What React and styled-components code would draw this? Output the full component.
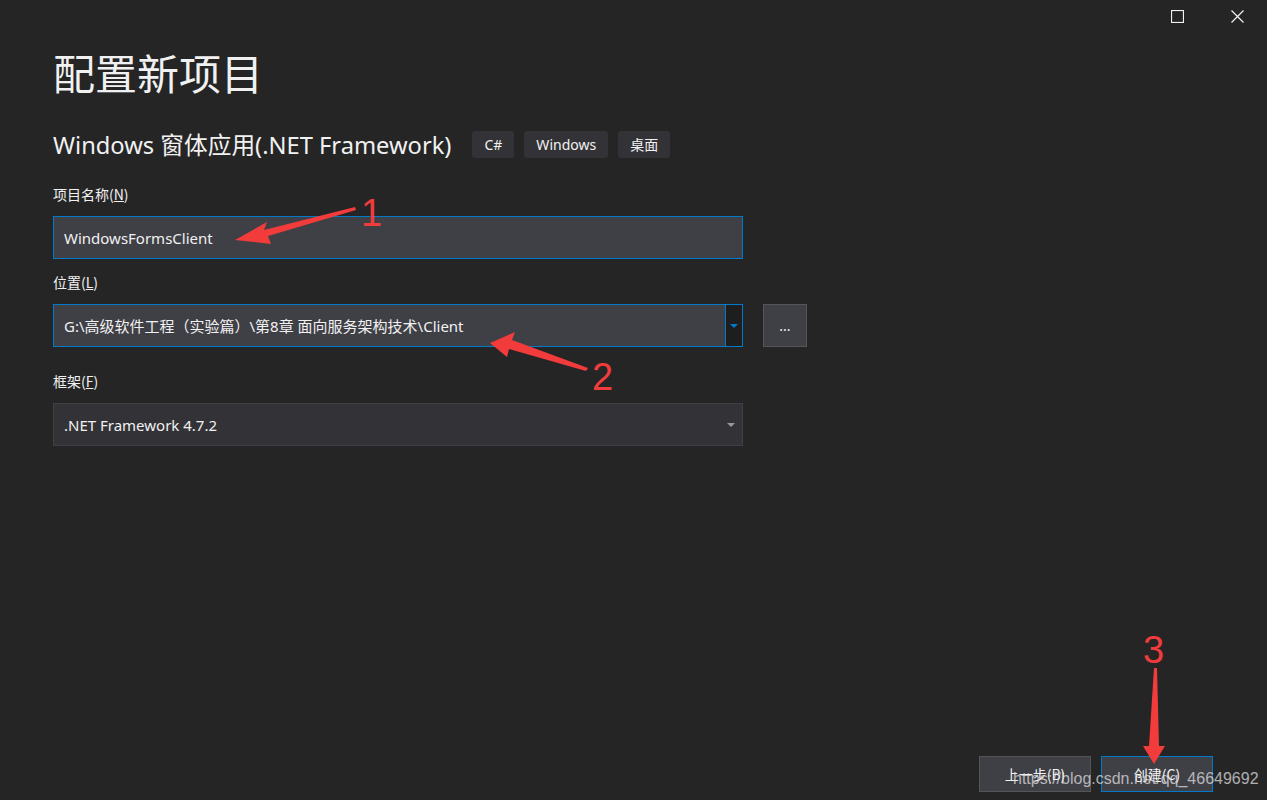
import React from 'react';
import styled, { createGlobalStyle } from 'styled-components';

const GlobalStyle = createGlobalStyle`
  html, body {
    margin: 0;
    padding: 0;
    background: #252526;
  }
  body {
    font-family: "Noto Sans", "Noto Sans CJK SC", sans-serif;
    color: #f1f1f1;
  }
`;

const Page = styled.div`
  position: relative;
  width: 1267px;
  height: 800px;
  overflow: hidden;
  display: flex;
  flex-direction: column;
  background: #252526;
`;

const TitleBar = styled.div`
  display: flex;
  justify-content: flex-end;
  height: 32px;
`;

const WinButton = styled.div`
  width: 60px;
  height: 32px;
  display: flex;
  align-items: center;
  justify-content: center;
`;

const Content = styled.div`
  display: flex;
  flex-direction: column;
  padding-left: 53px;
  flex: 1;
`;

const Title = styled.h1`
  margin: 10px 0 0 0;
  font-family: "Noto Sans CJK SC", sans-serif;
  font-size: 42px;
  font-weight: 400;
  line-height: 60px;
  color: #f1f1f1;
`;

const SubRow = styled.div`
  display: flex;
  align-items: center;
  margin-top: 22px;
  height: 40px;
`;

const SubTitle = styled.div`
  font-family: "Noto Sans", "Noto Sans CJK SC", sans-serif;
  font-size: 23.7px;
  margin-right: 21px;
  color: #f1f1f1;
`;

const Tag = styled.div`
  height: 27px;
  padding: 0 12px;
  margin-right: 10px;
  display: flex;
  align-items: center;
  background: #333337;
  border-radius: 3px;
  font-size: 14px;
  color: #f1f1f1;
`;

const Label = styled.div`
  font-family: "Noto Sans CJK SC", sans-serif;
  font-size: 14px;
  line-height: 20px;
  margin-top: ${p => p.$top}px;
  margin-bottom: 12px;
  color: #f1f1f1;
  u { text-decoration: underline; }
`;

const FieldRow = styled.div`
  display: flex;
  align-items: center;
`;

const TextBox = styled.div`
  box-sizing: border-box;
  width: 690px;
  height: 43px;
  display: flex;
  align-items: center;
  background: ${p => (p.$dim ? '#333337' : '#3f3f46')};
  border: 1px solid ${p => (p.$focus ? '#007acc' : '#3f3f46')};
  font-size: 15px;
  color: #f1f1f1;
`;

const BoxText = styled.div`
  flex: 1;
  padding-left: 10px;
  white-space: nowrap;
  font-family: "Noto Sans", "Noto Sans CJK SC", sans-serif;
`;

const DropPart = styled.div`
  width: 16px;
  height: 100%;
  display: flex;
  align-items: center;
  justify-content: center;
  background: ${p => (p.$split ? '#1e1e1e' : 'transparent')};
  border-left: ${p => (p.$split ? '1px solid #007acc' : 'none')};
  margin-right: ${p => (p.$split ? '0' : '3px')};
`;

const Caret = styled.div`
  width: 0;
  height: 0;
  border-left: 4px solid transparent;
  border-right: 4px solid transparent;
  border-top: 4px solid ${p => p.$color};
`;

const BrowseButton = styled.div`
  box-sizing: border-box;
  width: 44px;
  height: 43px;
  margin-left: 20px;
  display: flex;
  align-items: center;
  justify-content: center;
  background: #3f3f46;
  border: 1px solid #555555;
  font-size: 14px;
  color: #f1f1f1;
`;

const Footer = styled.div`
  margin-top: auto;
  display: flex;
  justify-content: flex-end;
  gap: 10px;
  padding: 0 54px 8px 0;
`;

const FootButton = styled.div`
  box-sizing: border-box;
  width: 112px;
  height: 36px;
  display: flex;
  align-items: center;
  justify-content: center;
  background: #3f3f46;
  border: 1px solid ${p => (p.$primary ? '#007acc' : '#555555')};
  font-family: "Noto Sans CJK SC", sans-serif;
  font-size: 14px;
  color: #f1f1f1;
`;

const Overlay = styled.svg`
  position: absolute;
  left: 0;
  top: 0;
  pointer-events: none;
`;

const Watermark = styled.div`
  position: absolute;
  left: 1013px;
  top: 769px;
  font-family: "Liberation Sans", Arial, sans-serif;
  font-size: 16px;
  line-height: 20px;
  color: rgba(230, 230, 230, 0.72);
  white-space: nowrap;
`;

const Mark = ({ d }) => <path d={d} fill="#f23c3c" />;

export default function App() {
  return (
    <Page>
      <GlobalStyle />
      <TitleBar>
        <WinButton>
          <svg width="13" height="13" viewBox="0 0 13 13">
            <rect x="0.5" y="0.5" width="12" height="12" fill="none" stroke="#f1f1f1" strokeWidth="1.2" />
          </svg>
        </WinButton>
        <WinButton>
          <svg width="13" height="13" viewBox="0 0 13 13">
            <path d="M0.5 0.5 L12.5 12.5 M12.5 0.5 L0.5 12.5" stroke="#f1f1f1" strokeWidth="1.2" />
          </svg>
        </WinButton>
      </TitleBar>
      <Content>
        <Title>配置新项目</Title>
        <SubRow>
          <SubTitle>Windows 窗体应用(.NET Framework)</SubTitle>
          <Tag>C#</Tag>
          <Tag>Windows</Tag>
          <Tag>桌面</Tag>
        </SubRow>
        <Label $top={20}>项目名称(<u>N</u>)</Label>
        <TextBox $focus>
          <BoxText>WindowsFormsClient</BoxText>
        </TextBox>
        <Label $top={13}>位置(<u>L</u>)</Label>
        <FieldRow>
          <TextBox $focus>
            <BoxText>G:\高级软件工程（实验篇）\第8章 面向服务架构技术\Client</BoxText>
            <DropPart $split>
              <Caret $color="#007acc" />
            </DropPart>
          </TextBox>
          <BrowseButton>...</BrowseButton>
        </FieldRow>
        <Label $top={24}>框架(<u>F</u>)</Label>
        <TextBox $dim>
          <BoxText>.NET Framework 4.7.2</BoxText>
          <DropPart>
            <Caret $color="#999999" />
          </DropPart>
        </TextBox>
      </Content>
      <Footer>
        <FootButton>上一步(B)</FootButton>
        <FootButton $primary>创建(C)</FootButton>
      </Footer>
      <Watermark>https://blog.csdn.net/qq_46649692</Watermark>
      <Overlay width="1267" height="800" viewBox="0 0 1267 800">
        <Mark d="M355 207 L264 230 L267 222 L235 240 L271 244 L268 236 L356 210 Z" />
        <Mark d="M588 368 L512 340 L515 332 L490 343 L507 357 L509 349 L586 371 Z" />
        <Mark d="M1154 668 L1157 668 L1159 746 L1165 746 L1154 764 L1143 746 L1149 746 Z" />
        <text x="361" y="226" fill="#f23c3c" fontSize="38" fontFamily="Liberation Sans, Arial, sans-serif">1</text>
        <text x="592" y="390" fill="#f23c3c" fontSize="38" fontFamily="Liberation Sans, Arial, sans-serif">2</text>
        <text x="1143" y="663" fill="#f23c3c" fontSize="38" fontFamily="Liberation Sans, Arial, sans-serif">3</text>
      </Overlay>
    </Page>
  );
}
